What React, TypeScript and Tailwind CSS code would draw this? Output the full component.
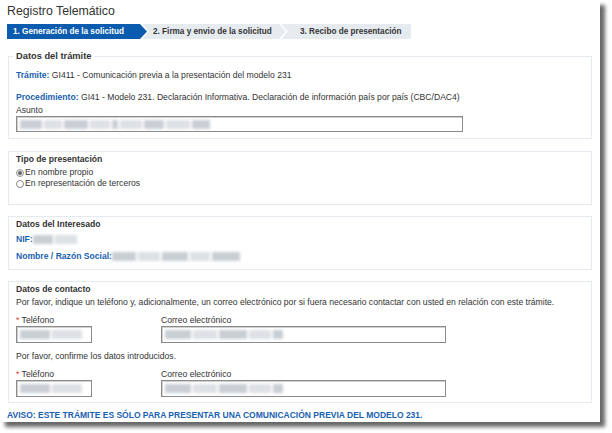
import type { ReactNode } from "react";

const blue = "text-[#1a5fb0]";

function Blur({ widths }: { widths: number[] }) {
  return (
    <span className="inline-flex h-[10px] items-center gap-[2px] align-middle blur-[1.5px]">
      {widths.map((w, i) => (
        <span
          key={i}
          className={i % 2 === 0 ? "h-[9px] bg-[#c9ced4]" : "h-[9px] bg-[#dde1e5]"}
          style={{ width: w }}
        />
      ))}
    </span>
  );
}

function Input({ width, height = 17, blur }: { width: number; height?: number; blur: number[] }) {
  return (
    <div
      className="flex items-center border border-[#8a8a8a] bg-white px-[3px] shadow-[inset_1px_1px_0_#d0d0d0]"
      style={{ width, height }}
    >
      <Blur widths={blur} />
    </div>
  );
}

function Box({ title, className = "", children }: { title: string; className?: string; children: ReactNode }) {
  return (
    <div className={`mx-[1px] border border-[#e4eaf0] px-[7px] pt-[1px] ${className}`}>
      <div className="text-[8.6px] font-bold leading-[12px] text-[#333]">{title}</div>
      {children}
    </div>
  );
}

function ContactRow() {
  return (
    <div className="flex gap-[69px]">
      <div>
        <div className="leading-[11px]">
          <span className="text-[#d33]">*</span> Teléfono
        </div>
        <Input width={76} blur={[30, 30]} />
      </div>
      <div>
        <div className="leading-[11px]">Correo electrónico</div>
        <Input width={285} blur={[26, 24, 28, 22, 10]} />
      </div>
    </div>
  );
}

export default function App() {
  return (
    <div className="h-[433px] w-[612px] bg-white font-['Liberation_Sans',Arial,sans-serif] text-[8.6px] text-[#333]">
      <div className="h-[422px] w-[600px] bg-white px-[7px] pt-[3px] shadow-[5px_5px_4px_rgba(0,0,0,0.6)]">
        <h1 className="text-[12.3px] leading-[16px] text-[#333]">Registro Telemático</h1>

        <div className="mt-[5px] flex h-[15px] text-[8.2px] font-bold leading-[15px]">
          <div className="w-[140px] bg-[#0b5cae] pl-[6px] text-white [clip-path:polygon(0_0,calc(100%_-_7px)_0,100%_50%,calc(100%_-_7px)_100%,0_100%)]">
            1. Generación de la solicitud
          </div>
          <div className="-ml-[5px] w-[144px] bg-[#e6ebf0] pl-[11px] text-[#333] [clip-path:polygon(0_0,calc(100%_-_7px)_0,100%_50%,calc(100%_-_7px)_100%,0_100%,7px_50%)]">
            2. Firma y envio de la solicitud
          </div>
          <div className="-ml-[5px] w-[130px] bg-[#e6ebf0] pl-[19px] text-[#333] [clip-path:polygon(0_0,100%_0,100%_100%,0_100%,7px_50%)]">
            3. Recibo de presentación
          </div>
        </div>

        <fieldset className="mx-[1px] mt-[10px] border border-[#e4eaf0] px-[7px] pb-[6px]">
          <legend className="ml-[-3px] px-[3px] text-[9.3px] font-bold leading-[14px] text-[#333]">Datos del trámite</legend>
          <p className="mt-[6px] leading-[12px]">
            <b className={blue}>Trámite:</b> GI411 - Comunicación previa a la presentación del modelo 231
          </p>
          <p className="mt-[10px] leading-[12px]">
            <b className={blue}>Procedimiento:</b> GI41 - Modelo 231. Declaración Informativa. Declaración de información país por país (CBC/DAC4)
          </p>
          <div className="mt-[2px] leading-[11px]">Asunto</div>
          <Input width={447} height={16} blur={[22, 18, 24, 20, 6, 22, 20, 24, 18]} />
        </fieldset>

        <Box title="Tipo de presentación" className="mt-[12px] h-[54px]">
          <label className="mt-[2px] flex items-center leading-[11px]">
            <span className="mr-[1px] flex h-[8px] w-[8px] items-center justify-center rounded-full border border-[#999] bg-[#e8e8e8]">
              <span className="h-[4px] w-[4px] rounded-full bg-[#666]" />
            </span>
            En nombre propio
          </label>
          <label className="flex items-center leading-[11px]">
            <span className="mr-[1px] h-[8px] w-[8px] rounded-full border border-[#888] bg-white" />
            En representación de terceros
          </label>
        </Box>

        <Box title="Datos del Interesado" className="mt-[11px] h-[54px]">
          <div className="mt-[3px] flex items-center leading-[12px]">
            <b className={blue}>NIF:</b>
            <Blur widths={[20, 22]} />
          </div>
          <div className="mt-[5px] flex items-center leading-[12px]">
            <b className={blue}>Nombre / Razón Social:</b>
            <Blur widths={[24, 22, 26, 20, 28]} />
          </div>
        </Box>

        <Box title="Datos de contacto" className="mt-[11px] h-[122px]">
          <p className="mt-[1px] leading-[12px]">
            Por favor, indique un teléfono y, adicionalmente, un correo electrónico por si fuera necesario contactar con usted en relación con este trámite.
          </p>
          <div className="mt-[7px]">
            <ContactRow />
          </div>
          <p className="mt-[7px] leading-[12px]">Por favor, confirme los datos introducidos.</p>
          <div className="mt-[7px]">
            <ContactRow />
          </div>
        </Box>

        <div className={`mt-[6px] text-[8.5px] font-bold leading-[12px] ${blue}`}>
          AVISO: ESTE TRÁMITE ES SÓLO PARA PRESENTAR UNA COMUNICACIÓN PREVIA DEL MODELO 231.
        </div>
      </div>
    </div>
  );
}
